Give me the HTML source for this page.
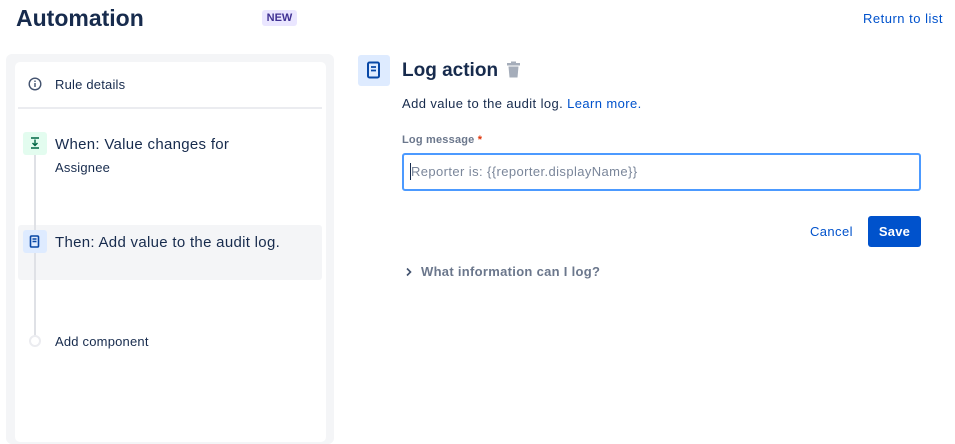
<!DOCTYPE html>
<html><head><meta charset="utf-8"><style>
*{box-sizing:border-box;margin:0;padding:0}
body{width:955px;height:431px;overflow:hidden;background:#fff;font-family:"Liberation Sans",sans-serif;color:#172b4d;position:relative;letter-spacing:.2px}
.a{position:absolute}
</style></head><body>
<div class="a" style="left:16px;top:5px;font-size:23px;font-weight:bold;color:#172b4d;letter-spacing:0">Automation</div>
<div class="a" style="left:262px;top:10px;width:35px;height:16px;background:#eae6ff;color:#403294;font-size:11px;font-weight:bold;text-align:center;line-height:16px;border-radius:3px;letter-spacing:0">NEW</div>
<div class="a" style="left:863px;top:11px;font-size:13px;color:#0052cc;letter-spacing:.5px">Return to list</div>

<div class="a" style="left:6px;top:54px;width:328px;height:390px;background:#f4f5f7;border-radius:6px"></div>
<div class="a" style="left:15px;top:62px;width:311px;height:380px;background:#fff;border-radius:5px"></div>
<svg class="a" style="left:28px;top:77px" width="14" height="14" viewBox="0 0 14 14"><circle cx="7" cy="7" r="5.8" fill="none" stroke="#42526e" stroke-width="1.4"/><rect x="6.3" y="6" width="1.4" height="4" fill="#42526e"/><circle cx="7" cy="4.2" r=".8" fill="#42526e"/></svg>
<div class="a" style="left:55px;top:77px;font-size:13px;color:#172b4d">Rule details</div>
<div class="a" style="left:18px;top:107px;width:304px;height:2px;background:#ebecf0"></div>

<div class="a" style="left:18px;top:225px;width:304px;height:55px;background:#f4f5f7;border-radius:3px"></div>
<div class="a" style="left:34px;top:155px;width:2px;height:181px;background:#dfe1e6"></div>
<div class="a" style="left:23px;top:132px;width:24px;height:23px;background:#e3fcef;border-radius:3px"></div>
<svg class="a" style="left:28px;top:136px" width="14" height="14" viewBox="0 0 14 14"><path d="M3 2h8M7 3.5v6M4.5 7l2.5 2.5L9.5 7M3 12h8" stroke="#006644" stroke-width="1.4" fill="none"/></svg>
<div class="a" style="left:55px;top:136px;font-size:15px;letter-spacing:.3px">When: Value changes for</div>
<div class="a" style="left:55px;top:160px;font-size:13px">Assignee</div>
<div class="a" style="left:23px;top:230px;width:24px;height:23px;background:#deebff;border-radius:3px"></div>
<svg class="a" style="left:29px;top:235px" width="12" height="14" viewBox="0 0 12 14"><rect x="1.5" y="1" width="8" height="11" rx="1" fill="none" stroke="#0747a6" stroke-width="1.6"/><path d="M3.5 4h4M3.5 6.5h4" stroke="#0747a6" stroke-width="1.4"/></svg>
<div class="a" style="left:55px;top:234px;font-size:15px;letter-spacing:.3px">Then: Add value to the audit log.</div>
<div class="a" style="left:29px;top:335px;width:12px;height:12px;border:2px solid #ebecf0;border-radius:50%;background:#fff"></div>
<div class="a" style="left:55px;top:334px;font-size:13px">Add component</div>

<div class="a" style="left:358px;top:55px;width:32px;height:31px;background:#deebff;border-radius:3px"></div>
<svg class="a" style="left:366px;top:61px" width="16" height="19" viewBox="0 0 16 19"><rect x="2" y="1.5" width="11" height="15" rx="1.5" fill="none" stroke="#0747a6" stroke-width="2"/><path d="M5 6h5M5 9.5h5" stroke="#0747a6" stroke-width="1.8"/></svg>
<div class="a" style="left:402px;top:60px;font-size:19px;font-weight:bold;letter-spacing:0">Log action</div>
<svg class="a" style="left:505px;top:61px" width="17" height="18" viewBox="0 0 17 18"><rect x="2" y="2" width="13" height="2.5" fill="#a5adba"/><rect x="6" y="0.5" width="5" height="2" fill="#a5adba"/><path d="M3.5 5.5h10l-1 11h-8z" fill="#a5adba"/></svg>
<div class="a" style="left:402px;top:96px;font-size:13px;color:#172b4d;letter-spacing:.4px">Add value to the audit log. <span style="color:#0052cc">Learn more.</span></div>
<div class="a" style="left:402px;top:134px;font-size:11px;font-weight:bold;color:#6b778c">Log message<span style="color:#de350b"> *</span></div>
<div class="a" style="left:402px;top:153px;width:519px;height:38px;border:2px solid #4c9aff;border-radius:3px;background:#fff"></div>
<div class="a" style="left:410px;top:163px;width:1px;height:17px;background:#172b4d"></div>
<div class="a" style="left:411px;top:164px;font-size:13px;color:#7a869a;letter-spacing:.4px">Reporter is: {{reporter.displayName}}</div>
<div class="a" style="left:810px;top:224px;font-size:13px;color:#0052cc;letter-spacing:.4px">Cancel</div>
<div class="a" style="left:868px;top:216px;width:53px;height:31px;background:#0052cc;border-radius:3px;color:#fff;font-size:13px;font-weight:bold;text-align:center;line-height:31px">Save</div>
<svg class="a" style="left:405px;top:267px" width="8" height="10" viewBox="0 0 8 10"><path d="M2 1.5l3.5 3.5L2 8.5" stroke="#42526e" stroke-width="1.6" fill="none"/></svg>
<div class="a" style="left:421px;top:264px;font-size:13px;font-weight:bold;color:#6b778c;letter-spacing:.3px">What information can I log?</div>
</body></html>
